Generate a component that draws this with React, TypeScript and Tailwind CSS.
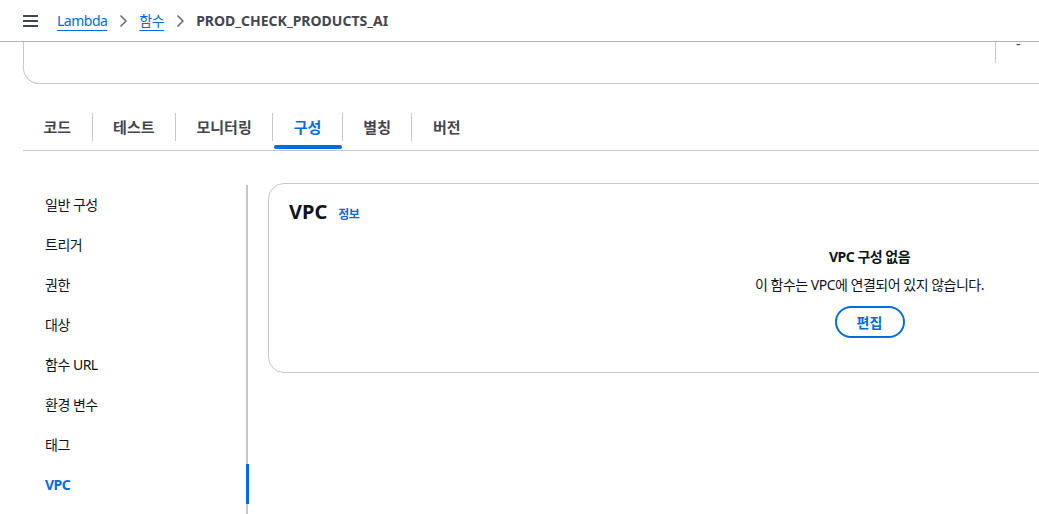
import React from 'react';

const tabs = ["코드", "테스트", "모니터링", "구성", "별칭", "버전"];
const navItems = ["일반 구성", "트리거", "권한", "대상", "함수 URL", "환경 변수", "태그", "VPC"];

const Chevron = () => (
    <svg width="16" height="16" viewBox="0 0 16 16" fill="none" className="mx-[8px]">
        <path d="M5.5 2.5 11 8l-5.5 5.5" stroke="#656871" strokeWidth="1.5" strokeLinejoin="round" />
    </svg>
);

const App = () => {
    const activeTab = 3;
    const activeNav = 7;

    return (
        <div className="w-[1039px] h-[514px] overflow-hidden bg-white text-[#0f141a] font-['Noto_Sans','Noto_Sans_CJK_KR',sans-serif] text-[14px] tracking-[-0.5px]">
            {/* top bar */}
            <div className="relative z-10 h-[42px] bg-white border-b border-[#b4b4bb] flex items-center pl-[23px]">
                <svg width="15" height="12" viewBox="0 0 15 12" className="mr-[19px]">
                    <path d="M0 1h15M0 6h15M0 11h15" stroke="#424650" strokeWidth="2" />
                </svg>
                <a className="text-[#006ce0] underline underline-offset-[4px] decoration-1 leading-none">Lambda</a>
                <Chevron />
                <a className="text-[#006ce0] underline underline-offset-[4px] decoration-1 leading-none">함수</a>
                <Chevron />
                <span className="font-bold text-[#424650] leading-none tracking-normal">PROD_CHECK_PRODUCTS_AI</span>
            </div>

            <div className="w-[1500px] pl-[23px]">
                {/* summary card, scrolled under the top bar */}
                <div className="w-[1448px] h-[42px] border-x border-b border-[#c6c6cd] rounded-b-[16px] flex">
                    <div className="w-[971px]" />
                    <div className="w-px h-[21px] bg-[#c6c6cd]" />
                    <div className="pl-[20px] -mt-[8px] leading-[20px] text-[#424650]">-</div>
                </div>

                {/* tabs */}
                <div className="mt-[20px] h-[47px] border-b border-[#c6c6cd] flex items-center tracking-normal">
                    {tabs.map((tab, index) => (
                        <React.Fragment key={tab}>
                            {index > 0 && <div className="w-px h-[28px] bg-[#c6c6cd]" />}
                            <div className={`relative h-full flex items-center px-[20.5px] text-[15px] font-bold ${index === activeTab ? "text-[#006ce0]" : "text-[#424650]"}`}>
                                {tab}
                                {index === activeTab && (
                                    <div className="absolute left-[1px] right-0 bottom-[1px] h-[4px] rounded-full bg-[#006ce0]" />
                                )}
                            </div>
                        </React.Fragment>
                    ))}
                </div>

                <div className="flex mt-[32px]">
                    {/* side nav */}
                    <div className="w-[225px] mt-[2px] h-[400px] border-r-2 border-[#c6c6cd] flex flex-col">
                        {navItems.map((item, index) => (
                            <div
                                key={item}
                                className={`relative h-[40px] flex items-center pl-[22px] ${index === 0 ? "-mt-[1px]" : ""} ${index === activeNav ? "text-[#006ce0] font-bold" : "text-[#0f141a]"}`}
                            >
                                {item}
                                {index === activeNav && (
                                    <div className="absolute -right-[3px] top-0 h-[40px] w-[3px] bg-[#006ce0]" />
                                )}
                            </div>
                        ))}
                    </div>

                    {/* VPC card */}
                    <div className="ml-[20px] w-[1203px] h-[190px] border border-[#c6c6cd] rounded-[16px] px-[20px] pt-[16px]">
                        <div className="flex items-baseline gap-[11px]">
                            <span className="text-[20px] font-bold leading-[24px] tracking-normal">VPC</span>
                            <span className="text-[12px] font-bold text-[#006ce0]">정보</span>
                        </div>
                        <div className="flex flex-col items-center mt-[23px]">
                            <div className="font-bold leading-[20px]">VPC 구성 없음</div>
                            <div className="mt-[8px] leading-[20px]">이 함수는 VPC에 연결되어 있지 않습니다.</div>
                            <button className="mt-[11px] w-[70px] h-[32px] rounded-full border-2 border-[#006ce0] text-[#006ce0] font-bold tracking-normal">
                                편집
                            </button>
                        </div>
                    </div>
                </div>
            </div>
        </div>
    );
};

export default App;
